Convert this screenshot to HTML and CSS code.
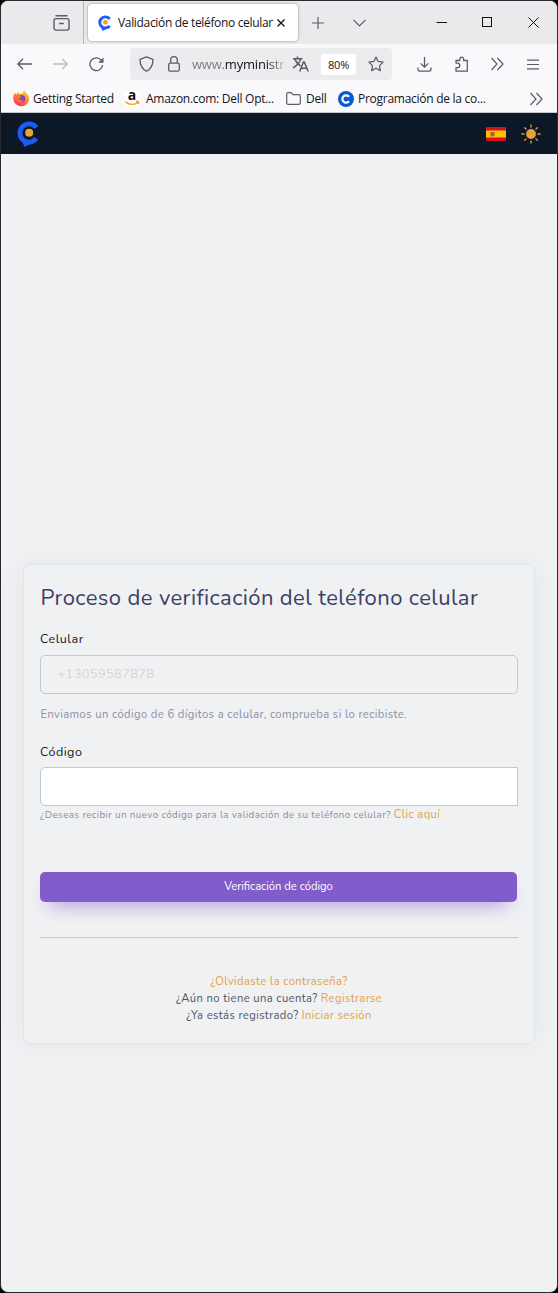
FILE: index.html
```html
<!DOCTYPE html>
<html lang="es">
<head>
<meta charset="utf-8">
<title>Validación de teléfono celular</title>
<link rel="stylesheet" href="styles.css">
</head>
<body>
<svg width="0" height="0" class="defs">
  <defs>
    <g id="brand">
      <path d="M19.200 6.400A9.100 9.100 0 1 0 19.200 17.600" fill="none" stroke="#1d5cf2" stroke-width="4.800"/>
      <path d="M4.500 18l2.800 8 8-4z" fill="#1d5cf2"/>
      <circle cx="12.200" cy="11.800" r="4" fill="#eda233"/>
    </g>
    <path id="chevrons" d="M1.500 1l5.500 6-5.500 6M7.500 1l5.500 6-5.500 6" fill="none" stroke="#5b5b66" stroke-width="1.200"/>
  </defs>
</svg>
<div class="window">
  <header class="tabs">
    <div class="tabs-left">
      <svg width="17" height="16" viewBox="0 0 17 16" fill="none" stroke="#5b5b66" stroke-width="1.400" stroke-linecap="round"><path d="M3 .800h11"/><rect x="1" y="3.600" width="15" height="11.500" rx="2"/><path d="M6.800 8.500h3.400"/></svg>
    </div>
    <div class="tab">
      <svg width="14" height="16" viewBox="0 0 23 26"><use href="#brand"/></svg>
      <span class="tab-title">Validación de teléfono celular</span>
      <svg width="8" height="8" viewBox="0 0 8 8" stroke="#15141a" stroke-width="1.400"><path d="M.500.500l7 7M7.500.500l-7 7"/></svg>
    </div>
    <svg class="plus" width="12" height="12" viewBox="0 0 12 12" stroke="#5b5b66" stroke-width="1.200"><path d="M6 0v12M0 6h12"/></svg>
    <svg class="down" width="13" height="8" viewBox="0 0 13 8" fill="none" stroke="#5b5b66" stroke-width="1.200"><path d="M.500.800l6 6 6-6"/></svg>
    <div class="controls">
      <svg width="11" height="11" viewBox="0 0 11 11" stroke="#111"><path d="M.500 5.500h10.500"/></svg>
      <svg width="11" height="11" viewBox="0 0 11 11" stroke="#111" fill="none"><rect x=".5" y=".5" width="9" height="9"/></svg>
      <svg width="11" height="11" viewBox="0 0 11 11" stroke="#111"><path d="M.500.500l10 10M10.500.500l-10 10"/></svg>
    </div>
  </header>
  <div class="toolbar">
    <svg width="15" height="12" viewBox="0 0 15 12" fill="none" stroke="#5b5b66" stroke-width="1.300"><path d="M6 .800L.900 6 6 11.200M1 6h14"/></svg>
    <svg class="fwd" width="15" height="12" viewBox="0 0 15 12" fill="none" stroke="#bdbdc2" stroke-width="1.300"><path d="M9 .800L14.100 6 9 11.200M14 6H0"/></svg>
    <svg class="reload" width="15" height="15" viewBox="0 0 15 15" fill="none" stroke="#5b5b66" stroke-width="1.300"><path d="M12.300 3.200A6.400 6.400 0 1 0 13.700 8"/><path d="M14.500.500v5.300H9.200z" fill="#5b5b66" stroke="none"/></svg>
    <div class="url">
      <svg width="15" height="16" viewBox="0 0 15 16" fill="none" stroke="#5b5b66" stroke-width="1.300" stroke-linejoin="round"><path d="M7.500.900L14 3.400C14 9 12 12.800 7.500 15.200 3 12.800 1 9 1 3.400z"/></svg>
      <svg class="lock" width="12" height="16" viewBox="0 0 12 16" fill="none" stroke="#5b5b66" stroke-width="1.300"><rect x=".7" y="7.200" width="10.600" height="8" rx="1.500"/><path d="M2.700 7V4a3.300 3.300 0 0 1 6.600 0v3"/></svg>
      <span class="address">www.<b>myministr</b></span>
      <svg class="translate" width="17" height="16" viewBox="0 0 17 16" fill="none" stroke="#5b5b66" stroke-width="1.500"><path d="M1 2.700h9.500M5.500.500v2M2.800 2.700c1 3.300 3 5.500 5.700 7.200M8.700 2.700C8 6.500 5 9.500 1 12"/><path d="M7.700 15.500l3.700-9.500h.9l3.900 9.500M9 12.300h5.800"/></svg>
      <span class="zoom">80%</span>
      <svg class="star" width="16" height="16" viewBox="0 0 16 16" fill="none" stroke="#5b5b66" stroke-width="1.200" stroke-linejoin="round"><path d="M8 .900l2.100 4.500 5 .700-3.600 3.500.900 5L8 12.200l-4.400 2.400.900-5L.900 6.100l5-.700z"/></svg>
    </div>
    <svg class="dl" width="15" height="15" viewBox="0 0 15 15" fill="none" stroke="#5b5b66" stroke-width="1.300"><path d="M7.500 0v10M3.700 6.400l3.800 3.800 3.800-3.800M1 10.500v2q0 1.700 1.700 1.700h9.600q1.700 0 1.700-1.700v-2"/></svg>
    <svg class="ext" width="15" height="16" viewBox="0 0 15 16" fill="none" stroke="#5b5b66" stroke-width="1.300" stroke-linejoin="round"><path d="M2 7V4.500h3.800V3a1.900 1.900 0 0 1 3.800 0v1.500h3.700v10.700H2v-3.500h1.500a2.200 2.200 0 0 0 0-4.500z"/></svg>
    <svg class="more" width="14" height="14"><use href="#chevrons"/></svg>
    <svg class="menu" width="12" height="11" viewBox="0 0 12 11" stroke="#5b5b66" stroke-width="1.200"><path d="M0 1.100h12M0 5.500h12M0 9.900h12"/></svg>
  </div>
  <div class="bookmarks">
    <svg width="17" height="17" viewBox="0 0 17 17"><defs><linearGradient id="fox" x1=".8" y1="0" x2=".3" y2="1"><stop offset="0" stop-color="#ffdc3d"/><stop offset=".5" stop-color="#ff8a2b"/><stop offset="1" stop-color="#f52b63"/></linearGradient></defs><path d="M1.500 3l2 1.500L5 2l1.500 2 3-.500L11 0l2 3c2 1.500 3.500 4 3.200 6.500A8 8 0 0 1 .500 10C0 7 .500 5 1.500 3z" fill="url(#fox)"/><circle cx="8.700" cy="8.700" r="3.600" fill="#8544c8"/><path d="M3.500 5.500c2-.500 4 .200 5 1.700L6 8.500c.500 2 3 2.500 4.800 1-.500 3-6 4-7.300-.500z" fill="#ff7139"/></svg>
    <span class="bm bm-start">Getting Started</span>
    <svg class="amazon" width="15" height="16" viewBox="0 0 15 16"><rect width="15" height="16" fill="#fff"/><text x="2.800" y="9.200" class="a-logo">a</text><path d="M.500 10.800c4 3.300 9 3.200 12.500.700M11 10.500c1.800-.500 3-.300 2.500 2.500" fill="none" stroke="#f90" stroke-width="1.500"/></svg>
    <span class="bm bm-amazon">Amazon.com: Dell Opt...</span>
    <svg width="15" height="13" viewBox="0 0 15 13" fill="none" stroke="#5b5b66" stroke-width="1.200"><path d="M.700 2.200Q.700.700 2.200.700h3L7 2.700h5.800q1.500 0 1.500 1.500v6.600q0 1.500-1.500 1.500H2.200Q.700 12.300.700 10.800z"/></svg>
    <span class="bm bm-dell">Dell</span>
    <svg width="16" height="16" viewBox="0 0 16 16"><circle cx="8" cy="8" r="8" fill="#0759d6"/><path d="M11 5.700A3.700 3.700 0 1 0 11 10.300" fill="none" stroke="#fff" stroke-width="2.200"/></svg>
    <span class="bm bm-prog">Programación de la co...</span>
    <svg class="bm-more" width="14" height="14"><use href="#chevrons"/></svg>
  </div>
  <nav class="nav">
    <svg width="23" height="26" viewBox="0 0 23 26"><use href="#brand"/></svg>
    <svg class="flag" width="20" height="14" viewBox="0 0 20 14"><rect width="20" height="14" rx="1" fill="#d80f24"/><path d="M0 3.500h20v7H0z" fill="#ffc400"/><path d="M4.500 5h4v3q0 1.500-2 1.500t-2-1.500z" fill="#b45a2a"/><path d="M6.500 6.500h1.800v1.800H6.500z" fill="#956a83"/></svg>
    <svg width="20" height="20" viewBox="0 0 20 20"><circle cx="10" cy="10" r="4.900" fill="#e6a13a"/><path d="M10 1v2M10 17v2M1 10h2M17 10h2M3.600 3.600l1.400 1.400M15 15l1.400 1.400M3.600 16.400l1.400-1.400M15 5l1.400-1.400" stroke="#e6a13a" stroke-width="1.300" stroke-linecap="round"/></svg>
  </nav>
  <main class="page">
    <form class="card">
      <h1>Proceso de verificación del teléfono celular</h1>
      <label>Celular</label>
      <div class="field phone">+13059587878</div>
      <p class="sent">Enviamos un código de 6 dígitos a celular, comprueba si lo recibiste.</p>
      <label for="code">Código</label>
      <input class="field code" id="code">
      <p class="again"><small>¿Deseas recibir un nuevo código para la validación de su teléfono celular?</small><a>Clic aquí</a></p>
      <button type="button">Verificación de código</button>
      <hr>
      <div class="links">
        <p><a>¿Olvidaste la contraseña?</a></p>
        <p>¿Aún no tiene una cuenta? <a>Registrarse</a></p>
        <p>¿Ya estás registrado? <a>Iniciar sesión</a></p>
      </div>
    </form>
  </main>
</div>
</body>
</html>
```
FILE: styles.css
```css
*{box-sizing:border-box}
html{background:#000}
body{margin:0;font-family:"Open Sans","Noto Sans",sans-serif;font-size:12px;color:#15141a}
svg{display:block;flex:none}
.defs{position:absolute}
.window{height:1293px;border:1px solid #2b2a2e;border-radius:8px;overflow:hidden;display:flex;flex-direction:column;background:#f0f1f3}
.tabs{height:43px;background:#eaeaec;display:flex;align-items:center;flex:none}
.tabs-left{width:83px;height:43px;border-right:1px solid #b5b5b9;display:flex;align-items:center;padding-left:52px}
.tab{margin-left:4px;width:210px;height:37px;background:#fff;border-radius:4px;box-shadow:0 0 3px rgba(0,0,0,.4);display:flex;align-items:center;padding-left:10px}
.tab-title{margin-left:6px;width:159px;letter-spacing:-.33px;white-space:nowrap}
.plus{margin-left:14px}
.down{margin-left:29px}
.controls{margin-left:auto;display:flex;gap:35px;padding-right:18px}
.toolbar{height:41px;background:#f9f9fb;display:flex;align-items:center;flex:none;padding:0 0 1px 16px}
.fwd{margin-left:21px}
.reload{margin-left:21px}
.url{margin-left:26px;width:262px;height:32px;background:#ececee;border-radius:4px;display:flex;align-items:center;padding-left:9px}
.lock{margin-left:14px}
.address{margin-left:12px;width:96px;overflow:hidden;white-space:nowrap;font-size:13px;letter-spacing:-.2px;color:#7c7c82;-webkit-mask-image:linear-gradient(90deg,#000 78%,transparent)}
.address b{font-weight:400;color:#15141a}
.translate{margin-left:4px}
.zoom{margin-left:12px;width:35px;height:21px;line-height:21px;background:#fff;border-radius:3px;text-align:center;font-size:11px;letter-spacing:-.2px}
.star{margin-left:12px}
.dl{margin-left:25px}
.ext{margin-left:22px}
.more{margin-left:21px}
.menu{margin-left:23px}
.bookmarks{height:28px;background:#f9f9fb;border-bottom:1px solid #c7c7cb;display:flex;align-items:center;flex:none;padding-left:12px}
.bm{white-space:nowrap;letter-spacing:-.27px;flex:none}
.bm-start{margin-left:3px;width:92px}
.bm-amazon{margin-left:6px;width:140px}
.bm-dell{margin-left:5px;width:32px}
.bm-prog{margin-left:4px}
.bm-more{margin-left:auto;margin-right:14px}
.amazon{overflow:visible}
.a-logo{font:bold 14px "Open Sans",sans-serif;fill:#111}
.nav{height:41px;background:#0d1826;display:flex;align-items:center;flex:none;padding:0 16px}
.flag{margin-left:auto;margin-right:15px}
.page{flex:1;padding:410px 22px 0;font-family:Nunito,Lato,sans-serif;letter-spacing:.4px}
.card{height:480px;border:1px solid #dfe5ef;border-radius:7px;box-shadow:0 0 28px rgba(20,25,40,.055);padding:17px 16px 0;display:flex;flex-direction:column}
.card p{margin:0}
h1{margin:0;padding-left:.5px;font-size:22px;line-height:32px;font-weight:400;color:#3b4066;white-space:nowrap}
label{display:block;margin-top:16px;height:18px;line-height:18px;color:#0e1726;font-size:12.5px;letter-spacing:.5px}
.field{width:478px;height:39px;border:1px solid #bfc9d4;border-radius:5px;margin:7px 0 0;flex:none}
.phone{padding-left:16.5px;line-height:37px;color:#d5d5d5;font-size:12.8px}
.card .sent{margin-top:12px;padding-left:.5px;line-height:18px;font-size:11.2px;color:#888ea8;white-space:nowrap}
.sent + label{margin-top:19px}
.code{margin-top:6px;background:#fff;border-radius:5px 0 0 5px;outline:0}
.again{height:18px;line-height:16px;color:#888ea8;white-space:nowrap}
.again small{font-size:9.8px;margin-right:3px}
a{color:#e2a03f;font-size:11.2px}
button{margin:48px 0 0;width:477px;height:30px;padding:0 0 1px;border:0;border-radius:5px;background:#805dca;color:#fff;font:11.2px Nunito,Lato,sans-serif;letter-spacing:0;box-shadow:0 10px 20px -10px #805dca}
hr{width:100%;height:1px;margin:35px 0;border:0;background:#c8cacd;flex:none}
.links{text-align:center;font-size:11.2px;line-height:17px;color:#515365;white-space:nowrap}
```
